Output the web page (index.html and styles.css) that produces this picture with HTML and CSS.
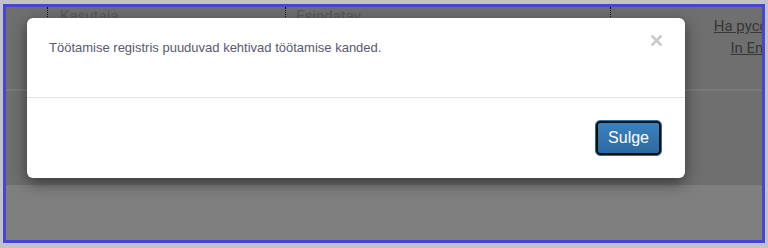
FILE: index.html
```html
<!DOCTYPE html>
<html lang="et">
<head>
    <meta charset="UTF-8">
    <meta name="viewport" content="width=device-width, initial-scale=1.0">
    <title>Töötamise register</title>
    <link rel="stylesheet" href="styles.css">
</head>
<body>
    <div class="frame">
        <div class="page">
            <div class="top">
                <div class="head-row">
                    <div class="cell cell-first"></div>
                    <div class="cell cell-user">Kasutaja</div>
                    <div class="cell cell-rep">Esindatav</div>
                    <div class="langs">
                        <a href="#">На русском</a>
                        <a href="#">In English</a>
                    </div>
                </div>
            </div>
            <div class="bottom"></div>
        </div>
        <div class="overlay">
            <div class="modal">
                <div class="modal-header">
                    <div class="modal-text">Töötamise registris puuduvad kehtivad töötamise kanded.</div>
                    <button class="close" type="button" aria-label="Sulge">
                        <svg width="11" height="11" viewBox="0 0 11 11">
                            <path d="M1.5 1.5 L9.5 9.5 M9.5 1.5 L1.5 9.5" stroke="#c9c9c9" stroke-width="2.6" stroke-linecap="square"/>
                        </svg>
                    </button>
                </div>
                <div class="modal-footer">
                    <button class="btn-primary" type="button">Sulge</button>
                </div>
            </div>
        </div>
    </div>
</body>
</html>
```

FILE: styles.css
```css
html, body {
    height: 100%;
}
body {
    margin: 0;
    padding: 4px 3px 5px 3px;
    box-sizing: border-box;
    background-color: #c3c3c3;
    font-family: "Liberation Sans", Arial, sans-serif;
}
.frame {
    position: relative;
    height: 100%;
    box-sizing: border-box;
    border: 3px solid #4646d2;
    overflow: hidden;
    background-color: #ffffff;
}
.page {
    width: 789px;
    display: flex;
    flex-direction: column;
    height: 100%;
}
.top {
    height: 178px;
    flex-shrink: 0;
    background-color: #dedede;
    background-image: linear-gradient(#f2f2f2, #f2f2f2);
    background-size: 100% 2px;
    background-position: 0 82px;
    background-repeat: no-repeat;
}
.bottom {
    flex: 1;
    background-color: #ffffff;
}
.head-row {
    display: flex;
    font-family: Roboto, "Liberation Sans", sans-serif;
}
.cell {
    height: 60px;
    font-size: 15px;
    line-height: 18px;
    color: #b2b2b2;
    padding-left: 12px;
    box-sizing: border-box;
}
.cell-first {
    width: 42px;
    border-right: 1px dotted #1a1a1a;
}
.cell-user {
    width: 238px;
    border-right: 1px dotted #1a1a1a;
}
.cell-rep {
    width: 325px;
    border-right: 1px dotted #1a1a1a;
    padding-left: 10px;
}
.langs {
    flex: 1;
    display: flex;
    flex-direction: column;
    align-items: flex-end;
    padding-top: 8px;
    font-size: 15px;
    line-height: 22px;
}
.langs a {
    color: #6e6e6e;
    text-decoration: underline;
}
.overlay {
    position: absolute;
    top: 0;
    left: 0;
    right: 0;
    bottom: 0;
    background-color: rgba(0, 0, 0, 0.5);
}
.modal {
    width: 658px;
    margin: 11px 0 0 21px;
    background-color: #ffffff;
    border-radius: 6px;
    box-shadow: 0 5px 15px rgba(0, 0, 0, 0.5);
}
.modal-header {
    display: flex;
    justify-content: space-between;
    align-items: flex-start;
    padding: 21px 23px 40px 22px;
    border-bottom: 1px solid #e5e5e5;
}
.modal-text {
    font-size: 13px;
    line-height: 18px;
    color: #5a5a6a;
}
.close {
    margin-top: -4px;
    padding: 0;
    border: 0;
    background: none;
    width: 11px;
    height: 11px;
    display: flex;
}
.modal-footer {
    display: flex;
    justify-content: flex-end;
    padding: 22px 23px 22px 0;
}
.btn-primary {
    height: 34px;
    margin: 1px;
    padding: 0 10px;
    font-family: "Liberation Sans", Arial, sans-serif;
    font-size: 16px;
    color: #ffffff;
    background-image: linear-gradient(#3a80bf, #2d6aa2);
    border: 2px solid #0e0e0e;
    border-radius: 4px;
    outline: 1px solid #2e6da4;
    outline-offset: 0;
}
```
